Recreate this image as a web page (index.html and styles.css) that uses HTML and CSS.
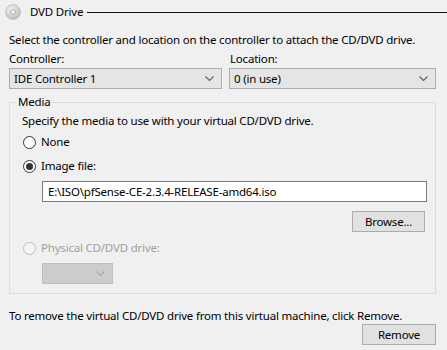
FILE: index.html
```html
<!DOCTYPE html>
<html>
<head>
<meta charset="utf-8">
<link rel="stylesheet" href="styles.css">
</head>
<body>
<div class="page">
  <div class="header">
    <svg class="disc" width="16" height="16" viewBox="0 0 16 16">
      <defs>
        <radialGradient id="dg" cx="0.4" cy="0.35" r="0.7">
          <stop offset="0" stop-color="#f4f4f4"/>
          <stop offset="0.6" stop-color="#d2d2d2"/>
          <stop offset="1" stop-color="#b4b4b4"/>
        </radialGradient>
      </defs>
      <circle cx="8" cy="8" r="7.5" fill="url(#dg)" stroke="#bdbdbd" stroke-width="0.8"/>
      <circle cx="8" cy="8" r="2.6" fill="#e8e8e8" stroke="#a9a9a9" stroke-width="0.8"/>
      <circle cx="8" cy="8" r="1" fill="#f0f0f0"/>
    </svg>
    <span class="title">DVD Drive</span>
    <span class="rule"></span>
  </div>
  <p class="intro">Select the controller and location on the controller to attach the CD/DVD drive.</p>
  <div class="selectors">
    <div class="field field-controller">
      <div class="label">Controller:</div>
      <div class="combo">
        <span class="combo-text">IDE Controller 1</span>
        <svg class="chev" width="9" height="6" viewBox="0 0 9 6"><polyline points="0.5,0.5 4.5,4.5 8.5,0.5" fill="none" stroke="#606060" stroke-width="1.1"/></svg>
      </div>
    </div>
    <div class="field field-location">
      <div class="label">Location:</div>
      <div class="combo">
        <span class="combo-text">0 (in use)</span>
        <svg class="chev" width="9" height="6" viewBox="0 0 9 6"><polyline points="0.5,0.5 4.5,4.5 8.5,0.5" fill="none" stroke="#606060" stroke-width="1.1"/></svg>
      </div>
    </div>
  </div>
  <fieldset class="media">
    <legend>Media</legend>
    <p class="media-intro">Specify the media to use with your virtual CD/DVD drive.</p>
    <div class="radio-row row-none"><span class="radio"></span><span>None</span></div>
    <div class="radio-row row-image"><span class="radio checked"></span><span>Image file:</span></div>
    <div class="textbox">E:\ISO\pfSense-CE-2.3.4-RELEASE-amd64.iso</div>
    <div class="browse-row"><div class="btn btn-browse">Browse...</div></div>
    <div class="radio-row row-physical disabled"><span class="radio"></span><span>Physical CD/DVD drive:</span></div>
    <div class="combo combo-disabled">
      <svg class="chev" width="9" height="6" viewBox="0 0 9 6"><polyline points="0.5,0.5 4.5,4.5 8.5,0.5" fill="none" stroke="#a8a8a8" stroke-width="1.1"/></svg>
    </div>
  </fieldset>
  <p class="outro">To remove the virtual CD/DVD drive from this virtual machine, click Remove.</p>
  <div class="remove-row"><div class="btn btn-remove">Remove</div></div>
</div>
</body>
</html>
```

FILE: styles.css
```css
html, body {
  margin: 0;
  padding: 0;
  background: #f0f0f0;
}
body {
  width: 447px;
  height: 350px;
  overflow: hidden;
  font-family: "Noto Sans", "Open Sans", sans-serif;
  font-size: 11.5px;
  letter-spacing: -0.2px;
  color: #000;
}
.page {
  display: flex;
  flex-direction: column;
}
.header {
  height: 24px;
  display: flex;
  align-items: center;
  padding-left: 5px;
}
.disc {
  flex: none;
}
.title {
  margin-left: 9px;
  line-height: 16px;
}
.rule {
  flex: 1;
  height: 1px;
  background: #111;
  margin-left: 4px;
}
p {
  margin: 0;
}
.intro {
  margin-top: 8px;
  padding-left: 9px;
  line-height: 16px;
  white-space: nowrap;
}
.selectors {
  display: flex;
  margin-top: 3px;
  padding-left: 9px;
  gap: 7px;
}
.field-controller {
  width: 213px;
}
.field-location {
  width: 207px;
}
.label {
  line-height: 16px;
  height: 16px;
}
.field-location .label {
  padding-left: 1px;
}
.combo {
  margin-top: 1px;
  height: 19px;
  border: 1px solid #adadad;
  background: #e5e5e5;
  display: flex;
  align-items: center;
  padding: 0 7px 0 4px;
}
.combo-text {
  flex: 1;
  line-height: 16px;
}
.chev {
  flex: none;
}
.media {
  margin: 5px 0 0 9px;
  width: 427px;
  padding: 0 0 9px 12px;
  border: 1px solid #dcdcdc;
  min-inline-size: 0;
  box-sizing: border-box;
}
.media legend {
  padding: 0 2px;
  margin-left: -6px;
  line-height: 16px;
}
.media-intro {
  margin-top: 3px;
  line-height: 16px;
}
.radio-row {
  display: flex;
  align-items: center;
  height: 16px;
  line-height: 16px;
}
.row-none {
  margin-top: 5px;
}
.row-image {
  margin-top: 8px;
}
.row-physical {
  margin-top: 8px;
}
.radio {
  width: 11px;
  height: 11px;
  border: 1px solid #333;
  border-radius: 50%;
  background: #fff;
  margin-left: 1px;
  margin-right: 5px;
  display: flex;
  align-items: center;
  justify-content: center;
  flex: none;
}
.radio.checked::after {
  content: "";
  width: 7px;
  height: 7px;
  border-radius: 50%;
  background: #333;
}
.disabled {
  color: #a0a0a0;
}
.disabled .radio {
  border-color: #bcbcbc;
  background: #f5f5f5;
}
.textbox {
  margin-top: 7px;
  margin-left: 20px;
  width: 378px;
  height: 19px;
  border: 1px solid #7a7a7a;
  background: #fff;
  padding-left: 5px;
  line-height: 19px;
}
.browse-row {
  display: flex;
  justify-content: flex-end;
  margin-top: 9px;
  padding-right: 10px;
}
.btn {
  height: 19px;
  border: 1px solid #adadad;
  background: #e1e1e1;
  display: flex;
  align-items: center;
  justify-content: center;
  line-height: 16px;
}
.btn-browse {
  width: 71px;
}
.combo-disabled {
  margin-top: 7px;
  margin-left: 20px;
  width: 58px;
  border-color: #bfbfbf;
  background: #cccccc;
  justify-content: flex-end;
}
.outro {
  margin-top: 14px;
  padding-left: 9px;
  line-height: 16px;
}
.remove-row {
  display: flex;
  justify-content: flex-end;
  padding-right: 11px;
}
.btn-remove {
  width: 72px;
}
```
